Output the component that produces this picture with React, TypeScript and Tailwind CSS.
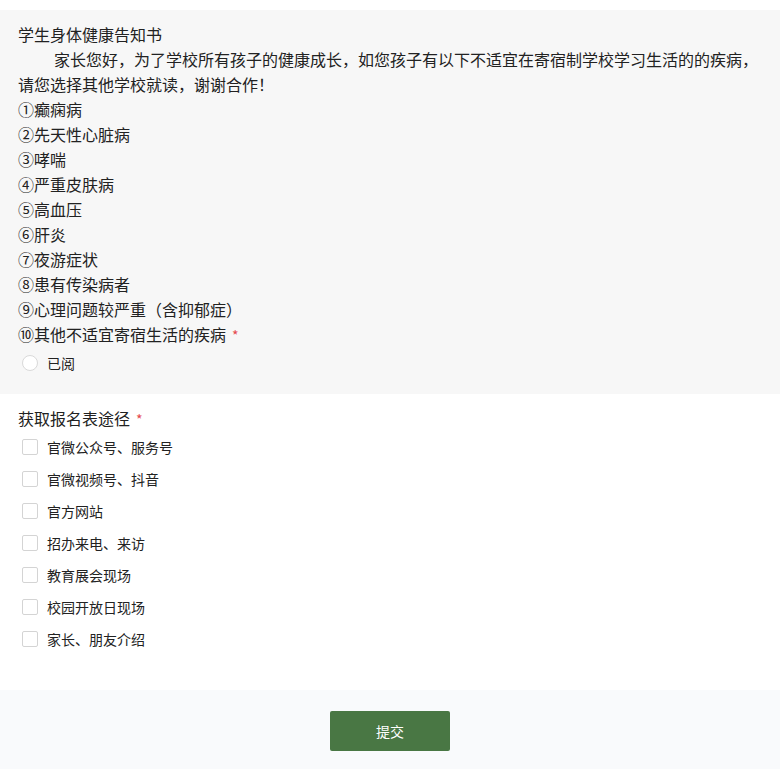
import React from "react";

const diseases = [
  "①癫痫病",
  "②先天性心脏病",
  "③哮喘",
  "④严重皮肤病",
  "⑤高血压",
  "⑥肝炎",
  "⑦夜游症状",
  "⑧患有传染病者",
  "⑨心理问题较严重（含抑郁症）",
];

const options = [
  "官微公众号、服务号",
  "官微视频号、抖音",
  "官方网站",
  "招办来电、来访",
  "教育展会现场",
  "校园开放日现场",
  "家长、朋友介绍",
];

export default function App() {
  return (
    <div
      className="w-[780px] min-h-[769px] bg-white text-[#222] flex flex-col"
      style={{ fontFamily: '"Microsoft YaHei", "Noto Sans CJK SC", "Noto Sans", sans-serif' }}
    >
      <div className="h-[10px] bg-white" />
      <section className="bg-[#f7f7f7] pl-[18px] pr-[18px] pt-[12px] pb-[15px]">
        <div className="text-[16px] leading-[25px]">
          <div className="h-[25px]">学生身体健康告知书</div>
          <div className="indent-[36px]">
            家长您好，为了学校所有孩子的健康成长，如您孩子有以下不适宜在寄宿制学校学习生活的的疾病，
            <br />
            请您选择其他学校就读，谢谢合作！
          </div>
          {diseases.map((d) => (
            <div key={d} className="h-[25px]">{d}</div>
          ))}
          <div className="h-[25px]">
            ⑩其他不适宜寄宿生活的疾病<span className="ml-[6px] text-[#e5484d] text-[14px]">*</span>
          </div>
        </div>
        <div className="h-[32px] flex items-center pl-[4px] gap-[9px]">
          <span className="w-[16px] h-[16px] rounded-full border border-[#d9d9d9] bg-white shrink-0" />
          <span className="text-[14px] leading-[20px]">已阅</span>
        </div>
      </section>
      <section className="bg-white pl-[18px] pr-[18px] pt-[12px] pb-[35px]">
        <div className="text-[16px] leading-[25px] h-[25px]">
          获取报名表途径<span className="ml-[6px] text-[#e5484d] text-[14px]">*</span>
        </div>
        <div className="flex flex-col">
          {options.map((o) => (
            <div key={o} className="h-[32px] flex items-center pl-[4px] gap-[9px]">
              <span className="w-[16px] h-[16px] rounded-[2px] border border-[#d4d4d4] bg-white shrink-0" />
              <span className="text-[14px] leading-[20px]">{o}</span>
            </div>
          ))}
        </div>
      </section>
      <footer className="flex-1 bg-[#f9fafc] flex justify-center pt-[21px] pb-[18px]">
        <button className="w-[120px] h-[40px] rounded-[2px] bg-[#497744] text-white text-[14px]">
          提交
        </button>
      </footer>
    </div>
  );
}
